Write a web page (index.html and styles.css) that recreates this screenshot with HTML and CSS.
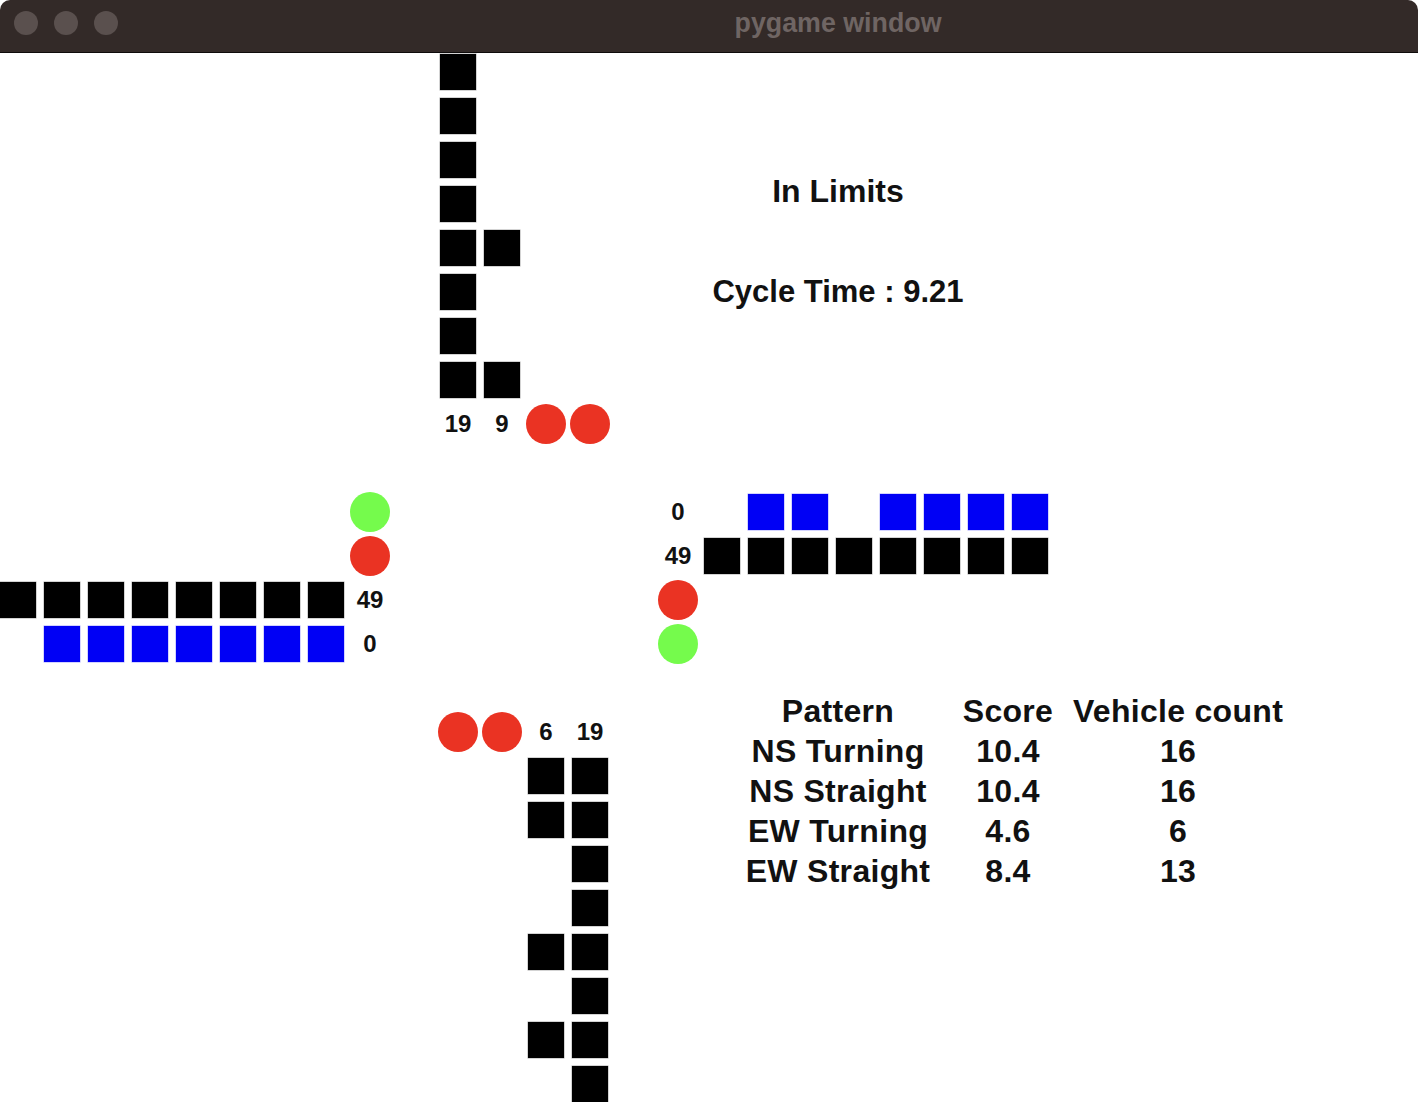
FILE: index.html
```html
<!DOCTYPE html>
<html>
<head>
<meta charset="utf-8">
<title>pygame window</title>
<link rel="stylesheet" href="styles.css">
</head>
<body>
<div class="window">
  <header class="titlebar">
    <span class="dot"></span><span class="dot"></span><span class="dot"></span>
    <span class="title">pygame window</span>
  </header>
  <main class="board">
    <!-- North queue -->
    <i class="car" style="grid-area:1/11"></i>
    <i class="car" style="grid-area:2/11"></i>
    <i class="car" style="grid-area:3/11"></i>
    <i class="car" style="grid-area:4/11"></i>
    <i class="car" style="grid-area:5/11"></i>
    <i class="car" style="grid-area:6/11"></i>
    <i class="car" style="grid-area:7/11"></i>
    <i class="car" style="grid-area:8/11"></i>
    <i class="car" style="grid-area:5/12"></i>
    <i class="car" style="grid-area:8/12"></i>
    <span class="num" style="grid-area:9/11">19</span>
    <span class="num" style="grid-area:9/12">9</span>
    <i class="light red" style="grid-area:9/13"></i>
    <i class="light red" style="grid-area:9/14"></i>

    <!-- West queue -->
    <i class="light green" style="grid-area:11/9"></i>
    <i class="light red" style="grid-area:12/9"></i>
    <i class="car" style="grid-area:13/1"></i>
    <i class="car" style="grid-area:13/2"></i>
    <i class="car" style="grid-area:13/3"></i>
    <i class="car" style="grid-area:13/4"></i>
    <i class="car" style="grid-area:13/5"></i>
    <i class="car" style="grid-area:13/6"></i>
    <i class="car" style="grid-area:13/7"></i>
    <i class="car" style="grid-area:13/8"></i>
    <span class="num" style="grid-area:13/9">49</span>
    <i class="car blue" style="grid-area:14/2"></i>
    <i class="car blue" style="grid-area:14/3"></i>
    <i class="car blue" style="grid-area:14/4"></i>
    <i class="car blue" style="grid-area:14/5"></i>
    <i class="car blue" style="grid-area:14/6"></i>
    <i class="car blue" style="grid-area:14/7"></i>
    <i class="car blue" style="grid-area:14/8"></i>
    <span class="num" style="grid-area:14/9">0</span>

    <!-- East queue -->
    <span class="num" style="grid-area:11/16">0</span>
    <i class="car blue" style="grid-area:11/18"></i>
    <i class="car blue" style="grid-area:11/19"></i>
    <i class="car blue" style="grid-area:11/21"></i>
    <i class="car blue" style="grid-area:11/22"></i>
    <i class="car blue" style="grid-area:11/23"></i>
    <i class="car blue" style="grid-area:11/24"></i>
    <span class="num" style="grid-area:12/16">49</span>
    <i class="car" style="grid-area:12/17"></i>
    <i class="car" style="grid-area:12/18"></i>
    <i class="car" style="grid-area:12/19"></i>
    <i class="car" style="grid-area:12/20"></i>
    <i class="car" style="grid-area:12/21"></i>
    <i class="car" style="grid-area:12/22"></i>
    <i class="car" style="grid-area:12/23"></i>
    <i class="car" style="grid-area:12/24"></i>
    <i class="light red" style="grid-area:13/16"></i>
    <i class="light green" style="grid-area:14/16"></i>

    <!-- South queue -->
    <i class="light red" style="grid-area:16/11"></i>
    <i class="light red" style="grid-area:16/12"></i>
    <span class="num" style="grid-area:16/13">6</span>
    <span class="num" style="grid-area:16/14">19</span>
    <i class="car" style="grid-area:17/13"></i>
    <i class="car" style="grid-area:18/13"></i>
    <i class="car" style="grid-area:21/13"></i>
    <i class="car" style="grid-area:23/13"></i>
    <i class="car" style="grid-area:17/14"></i>
    <i class="car" style="grid-area:18/14"></i>
    <i class="car" style="grid-area:19/14"></i>
    <i class="car" style="grid-area:20/14"></i>
    <i class="car" style="grid-area:21/14"></i>
    <i class="car" style="grid-area:22/14"></i>
    <i class="car" style="grid-area:23/14"></i>
    <i class="car" style="grid-area:24/14"></i>

    <div class="status">
      <p class="status-line">In Limits</p>
      <p class="status-line cycle">Cycle Time : 9.21</p>
    </div>

    <div class="scores">
      <span>Pattern</span><span>Score</span><span>Vehicle count</span>
      <span>NS Turning</span><span>10.4</span><span>16</span>
      <span>NS Straight</span><span>10.4</span><span>16</span>
      <span>EW Turning</span><span>4.6</span><span>6</span>
      <span>EW Straight</span><span>8.4</span><span>13</span>
    </div>
  </main>
</div>
</body>
</html>
```

FILE: styles.css
```css
html, body {
  margin: 0;
  padding: 0;
  background: #ffffff;
  overflow: hidden;
}

body {
  width: 1418px;
  height: 1102px;
  font-family: "Liberation Sans", Arial, sans-serif;
}

.window {
  width: 1418px;
  height: 1102px;
  overflow: hidden;
  background: #ffffff;
}

.titlebar {
  height: 52px;
  background: #332a28;
  border-bottom: 1px solid #0e0b0b;
  border-top-left-radius: 10px;
  border-top-right-radius: 10px;
  display: flex;
  align-items: center;
  padding-left: 14px;
  gap: 16px;
  box-sizing: content-box;
}

.dot {
  width: 24px;
  height: 24px;
  border-radius: 50%;
  background: #5a504e;
  margin-top: -6px;
}

.title {
  width: 400px;
  margin-left: 504px;
  text-align: center;
  font-weight: bold;
  font-size: 26.8px;
  color: #6f6563;
  line-height: 46px;
  margin-top: -6px;
}

.board {
  position: relative;
  padding-top: 1px;
  display: grid;
  grid-template-columns: repeat(33, 44px);
  grid-auto-rows: 44px;
}

.car {
  display: block;
  width: 36px;
  height: 36px;
  background: #000000;
  box-shadow: 0 0 0 0.5px rgba(0, 0, 0, 0.35);
}

.car.blue {
  background: #0000f5;
  box-shadow: 0 0 0 0.5px rgba(60, 60, 255, 0.45);
}

.light {
  display: block;
  width: 40px;
  height: 40px;
  margin: -2px 0 0 -2px;
  border-radius: 50%;
}

.light.red {
  background: #ea3323;
}

.light.green {
  background: #75fb4c;
}

.num {
  width: 36px;
  height: 36px;
  line-height: 36px;
  text-align: center;
  font-size: 24px;
  font-weight: bold;
  color: #111111;
  white-space: nowrap;
  display: flex;
  justify-content: center;
}

.status {
  position: absolute;
  left: 638px;
  top: 118px;
  width: 400px;
  text-align: center;
  color: #111111;
  font-weight: bold;
  font-size: 32px;
}

.status-line {
  margin: 0;
  line-height: 40px;
  height: 40px;
}

.status-line.cycle {
  margin-top: 61px;
  font-size: 31px;
}

.scores {
  position: absolute;
  left: 753px;
  top: 638px;
  display: grid;
  grid-template-columns: repeat(3, 170px);
  grid-auto-rows: 40px;
  justify-items: center;
  font-weight: bold;
  font-size: 32px;
  line-height: 40px;
  letter-spacing: 0.3px;
  color: #111111;
}

.scores span {
  white-space: nowrap;
  display: flex;
  justify-content: center;
  width: 0;
}
```
